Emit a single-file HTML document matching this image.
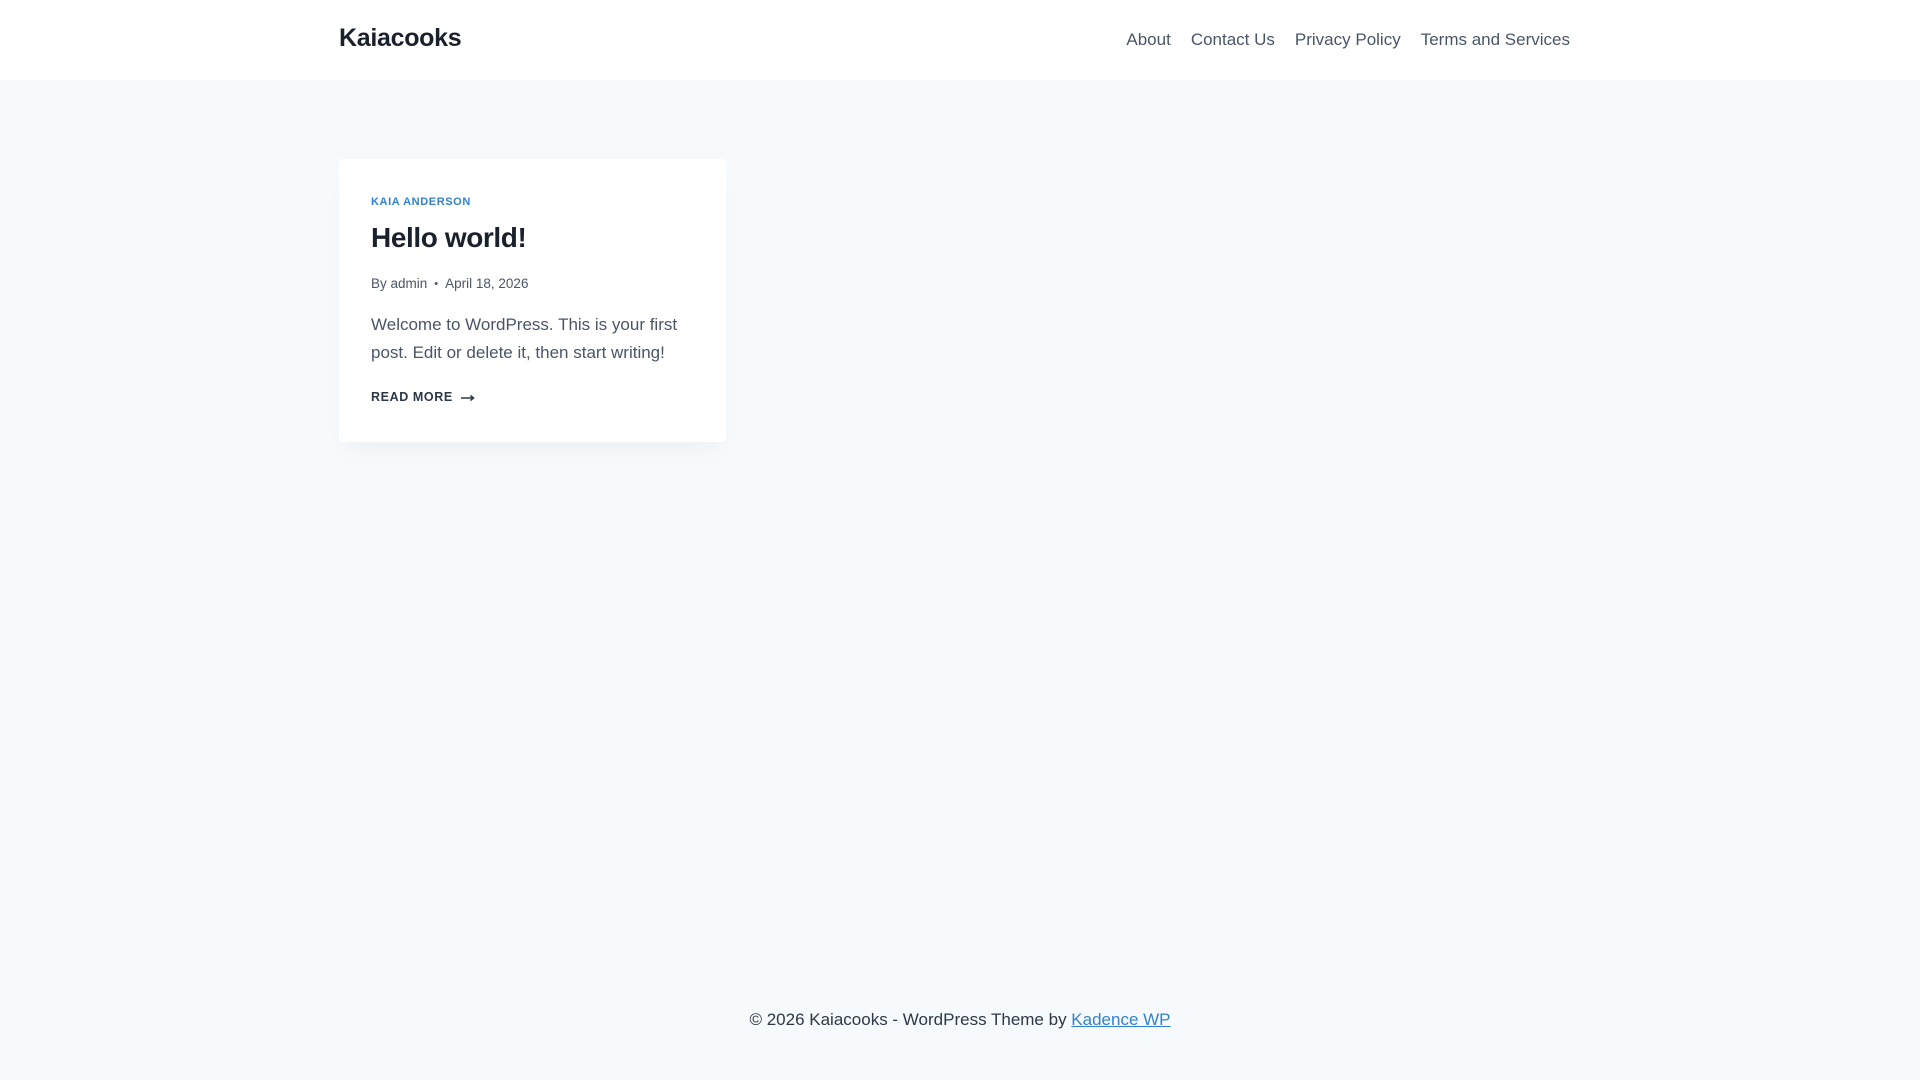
<!DOCTYPE html>
<html><head><meta charset="utf-8"><style>
*{box-sizing:border-box;margin:0;padding:0}
body{width:1920px;height:1080px;background:#f7fafc;font-family:"Liberation Sans",sans-serif;color:#2d3748;position:relative;overflow:hidden}
header{position:absolute;left:0;top:0;width:1920px;height:80px;background:#fff}
.logo{position:absolute;left:339px;top:24px;font-size:25px;font-weight:bold;color:#1a202c;letter-spacing:-0.3px}
nav{position:absolute;right:350px;top:30px;font-size:17px;color:#4a5568;display:flex;gap:20px;white-space:nowrap}
.card{position:absolute;left:339px;top:159px;width:387px;height:283px;background:#fff;border-radius:4px;box-shadow:0 15px 25px -10px rgba(0,0,0,0.05)}
.kick{position:absolute;left:32px;top:37px;font-size:11px;font-weight:bold;color:#3182ce;letter-spacing:0.6px}
h2{position:absolute;left:32px;top:63px;font-size:28px;font-weight:bold;color:#1a202c;letter-spacing:-0.4px}
.meta{position:absolute;left:32px;top:117px;font-size:13.5px;color:#4a5568;white-space:nowrap}
.meta span{margin:0 7px;font-size:11px;position:relative;top:-1px}
.ex{position:absolute;left:32px;top:152px;width:330px;font-size:17px;line-height:28px;color:#4a5568}
.rm{position:absolute;left:32px;top:231px;font-size:12.5px;font-weight:bold;color:#2d3748;letter-spacing:0.6px;white-space:nowrap}
footer{position:absolute;left:0;width:1920px;top:1010px;text-align:center;font-size:17px;color:#2d3748}
footer a{color:#3182ce;text-decoration:underline}
</style></head><body>
<header><div class="logo">Kaiacooks</div>
<nav><span>About</span><span>Contact Us</span><span>Privacy Policy</span><span>Terms and Services</span></nav></header>
<div class="card">
<div class="kick">KAIA ANDERSON</div>
<h2>Hello world!</h2>
<div class="meta">By admin<span>•</span>April 18, 2026</div>
<div class="ex">Welcome to WordPress. This is your first post. Edit or delete it, then start writing!</div>
<div class="rm">READ MORE <svg width="14" height="8" viewBox="0 0 14 8" style="margin-left:4px;vertical-align:middle"><path d="M0 4H12M9.5 1.5L12.5 4L9.5 6.5" stroke="#2d3748" stroke-width="1.5" fill="none"/></svg></div>
</div>
<footer>© 2026 Kaiacooks - WordPress Theme by <a>Kadence WP</a></footer>
</body></html>
